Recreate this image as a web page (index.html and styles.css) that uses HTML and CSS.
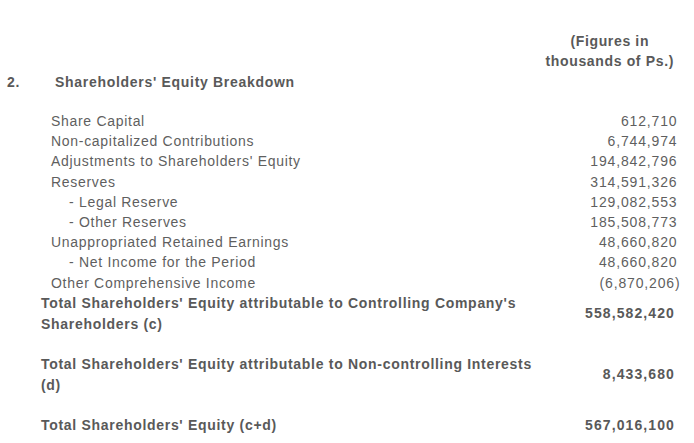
FILE: index.html
```html
<!DOCTYPE html>
<html>
<head>
<meta charset="utf-8">
<link rel="stylesheet" href="styles.css">
</head>
<body>
<div class="page">
  <div class="units">
    <div class="units-text">(Figures in<br>thousands of Ps.)</div>
  </div>
  <div class="heading">
    <span class="num">2.</span>
    <span class="title">Shareholders' Equity Breakdown</span>
  </div>
  <div class="items">
    <div class="row"><span class="label">Share Capital</span><span class="val">612,710</span></div>
    <div class="row"><span class="label">Non-capitalized Contributions</span><span class="val">6,744,974</span></div>
    <div class="row"><span class="label">Adjustments to Shareholders' Equity</span><span class="val">194,842,796</span></div>
    <div class="row"><span class="label">Reserves</span><span class="val">314,591,326</span></div>
    <div class="row sub"><span class="label">- Legal Reserve</span><span class="val">129,082,553</span></div>
    <div class="row sub"><span class="label">- Other Reserves</span><span class="val">185,508,773</span></div>
    <div class="row"><span class="label">Unappropriated Retained Earnings</span><span class="val">48,660,820</span></div>
    <div class="row sub"><span class="label">- Net Income for the Period</span><span class="val">48,660,820</span></div>
    <div class="row"><span class="label">Other Comprehensive Income</span><span class="val neg">(6,870,206)</span></div>
  </div>
  <div class="totals">
    <div class="total">
      <span class="tlabel">Total Shareholders' Equity attributable to Controlling Company's Shareholders (c)</span>
      <span class="tval">558,582,420</span>
    </div>
    <div class="total">
      <span class="tlabel">Total Shareholders' Equity attributable to Non-controlling Interests (d)</span>
      <span class="tval">8,433,680</span>
    </div>
    <div class="total">
      <span class="tlabel">Total Shareholders' Equity (c+d)</span>
      <span class="tval">567,016,100</span>
    </div>
  </div>
</div>
</body>
</html>
```
FILE: styles.css
```css
html, body {
  margin: 0;
  padding: 0;
  background: #ffffff;
}
.page {
  width: 694px;
  font-family: "Liberation Sans", Arial, sans-serif;
  color: #5f5f5f;
  font-size: 14px;
  letter-spacing: 0.7px;
}
.units {
  display: flex;
  justify-content: flex-end;
  padding-top: 31px;
  padding-right: 20px;
}
.units-text {
  font-weight: bold;
  text-align: center;
  line-height: 20px;
  color: #595959;
  letter-spacing: 0.65px;
}
.heading {
  display: flex;
  align-items: center;
  height: 21px;
  font-weight: bold;
  color: #595959;
}
.heading .num {
  width: 55px;
  padding-left: 7px;
  box-sizing: border-box;
}
.items {
  margin-top: 19px;
  padding-left: 51px;
  padding-right: 16.5px;
}
.row {
  display: flex;
  justify-content: space-between;
  height: 20.2px;
  line-height: 20.2px;
}
.row .val {
  letter-spacing: 0.85px;
}
.row.sub .label {
  padding-left: 18px;
}
.neg {
  margin-right: -3px;
}
.totals {
  padding-left: 41px;
  padding-right: 19px;
  font-weight: bold;
  color: #595959;
}
.total {
  display: flex;
  justify-content: space-between;
  align-items: center;
  line-height: 21px;
  margin-bottom: 19px;
}
.tlabel {
  width: 500px;
}
.tval {
  letter-spacing: 1.1px;
}
```
